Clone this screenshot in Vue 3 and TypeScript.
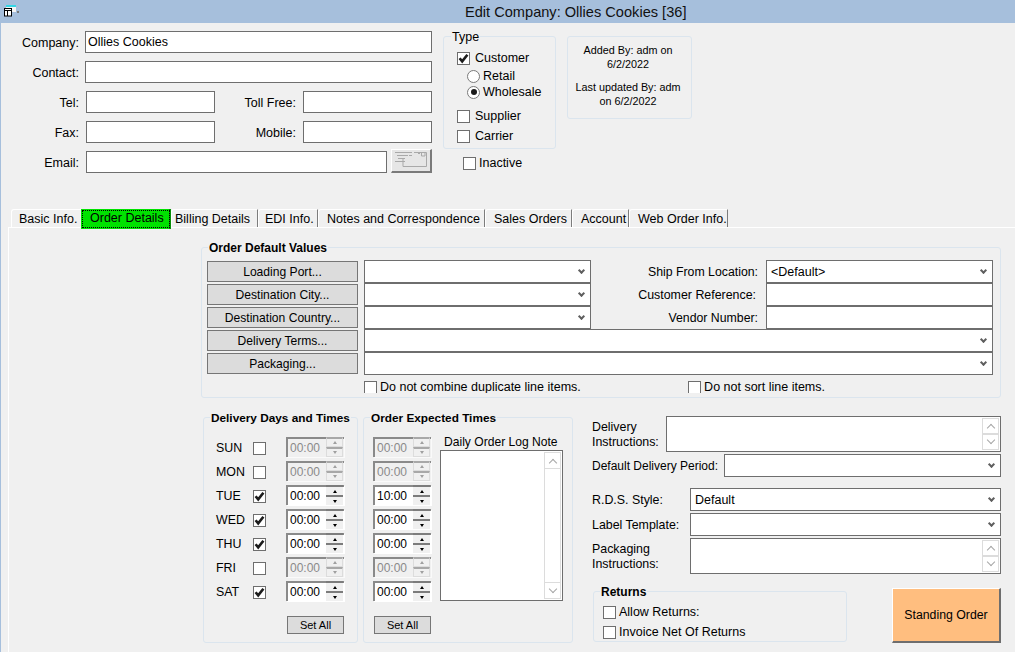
<script setup lang="ts">
type Day = { label: string; on: boolean; expected: string }
type Tab = { label: string; width: number; pad: number; active?: boolean }

const tabs: Tab[] = [
  { label: 'Basic Info.', width: 70, pad: 7 },
  { label: 'Order Details', width: 90, pad: 9 },
  { label: 'Billing Details', width: 87, pad: 3 },
  { label: 'EDI Info.', width: 60, pad: 6 },
  { label: 'Notes and Correspondence', width: 167, pad: 8 },
  { label: 'Sales Orders', width: 87, pad: 8 },
  { label: 'Account', width: 57, pad: 8 },
  { label: 'Web Order Info.', width: 99, pad: 8 },
]
tabs[1].active = true

const days: Day[] = [
  { label: 'SUN', on: false, expected: '00:00' },
  { label: 'MON', on: false, expected: '00:00' },
  { label: 'TUE', on: true, expected: '10:00' },
  { label: 'WED', on: true, expected: '00:00' },
  { label: 'THU', on: true, expected: '00:00' },
  { label: 'FRI', on: false, expected: '00:00' },
  { label: 'SAT', on: true, expected: '00:00' },
]
</script>

<template>
  <div class="window">
    <svg class="defs" width="0" height="0">
      <symbol id="tick" viewBox="0 0 13 13">
        <path d="M2.6 6.2 L5.2 9.4 L10.4 2.8" fill="none" stroke="#1c1c1c" stroke-width="2.6" />
      </symbol>
    </svg>

    <header class="titlebar">
      <svg class="app-icon" width="16" height="14" viewBox="0 0 16 14">
        <rect x="2" y="0" width="10" height="7" fill="#f4f4f4" />
        <rect x="2" y="0" width="10" height="2" fill="#35d6e6" />
        <rect x="13" y="6" width="2" height="2" fill="#777" />
        <rect x="0.5" y="3.5" width="7" height="7.5" fill="#fff" stroke="#000" />
        <path d="M1 5.5 H7 M3.5 6 V11" stroke="#000" />
      </svg>
      <span class="title">Edit Company: Ollies Cookies [36]</span>
    </header>

    <section class="head">
      <div class="contact">
        <label class="lbl">Company:</label>
        <div class="field wide">Ollies Cookies</div>
        <label class="lbl">Contact:</label>
        <div class="field wide"></div>
        <label class="lbl">Tel:</label>
        <div class="field"></div>
        <label class="lbl">Toll Free:</label>
        <div class="field"></div>
        <label class="lbl">Fax:</label>
        <div class="field"></div>
        <label class="lbl">Mobile:</label>
        <div class="field"></div>
        <label class="lbl">Email:</label>
        <div class="email-row">
          <div class="field grow"></div>
          <button class="mail-btn">
            <svg width="36" height="18" viewBox="0 0 36 18">
              <path
                d="M2 1.5 H19 M4 4.5 H15 M16 4.5 H19 M5 7.5 H12 M2 10.5 H12 M10 8 V15.5 H33.5 V1.5 H21 M25 2.5 H27 M28.5 1.5 H32 V5 H28.5 Z"
                fill="none"
                stroke="#a9a9a9"
              />
            </svg>
          </button>
        </div>
      </div>

      <div class="type-col">
        <fieldset class="group type">
          <legend>Type</legend>
          <div class="opt customer"><span class="box"><svg width="13" height="13"><use href="#tick" /></svg></span>Customer</div>
          <div class="opt radio"><span class="dot"></span>Retail</div>
          <div class="opt radio"><span class="dot on"></span>Wholesale</div>
          <div class="opt customer supplier"><span class="box"></span>Supplier</div>
          <div class="opt customer carrier"><span class="box"></span>Carrier</div>
        </fieldset>
        <div class="opt inactive"><span class="box"></span>Inactive</div>
      </div>

      <div class="audit">
        <p>Added By: adm on<br />6/2/2022</p>
        <p>Last updated By: adm<br />on 6/2/2022</p>
      </div>
    </section>

    <nav class="tabs">
      <div
        v-for="t in tabs"
        :key="t.label"
        class="tab"
        :class="{ active: t.active }"
        :style="{ width: t.width + 'px', paddingLeft: t.pad + 'px' }"
      >
        {{ t.label }}
      </div>
    </nav>

    <main class="panel">
      <fieldset class="group defaults">
        <legend class="bold">Order Default Values</legend>
        <div class="defaults-grid">
          <button class="lookup">Loading Port...</button>
          <div class="combo"></div>
          <label class="lbl-r">Ship From Location:</label>
          <div class="combo">&lt;Default&gt;</div>

          <button class="lookup">Destination City...</button>
          <div class="combo"></div>
          <label class="lbl-r shift">Customer Reference:</label>
          <div class="plain"></div>

          <button class="lookup">Destination Country...</button>
          <div class="combo"></div>
          <label class="lbl-r">Vendor Number:</label>
          <div class="plain"></div>

          <button class="lookup">Delivery Terms...</button>
          <div class="combo span3"></div>

          <button class="lookup">Packaging...</button>
          <div class="combo span3"></div>
        </div>
        <div class="clip-row">
          <div class="opt tight"><span class="box"></span>Do not combine duplicate line items.</div>
          <div class="opt tight second"><span class="box"></span>Do not sort line items.</div>
        </div>
      </fieldset>

      <div class="lower">
        <fieldset class="group days">
          <legend class="bold">Delivery Days and Times</legend>
          <div class="day-rows">
            <div v-for="d in days" :key="d.label" class="day-row">
              <span class="day-name">{{ d.label }}</span>
              <span class="box"><svg v-if="d.on" width="13" height="13"><use href="#tick" /></svg></span>
              <div class="spin" :class="{ off: !d.on }">
                <span class="spin-val">00:00</span>
                <span class="spin-btns"><i class="up"></i><i class="down"></i></span>
              </div>
            </div>
          </div>
          <button class="set-all days-set">Set All</button>
        </fieldset>

        <fieldset class="group expected">
          <legend class="bold">Order Expected Times</legend>
          <div class="expected-body">
            <div class="day-rows">
              <div v-for="d in days" :key="d.label" class="spin" :class="{ off: !d.on }">
                <span class="spin-val">{{ d.expected }}</span>
                <span class="spin-btns"><i class="up"></i><i class="down"></i></span>
              </div>
            </div>
            <div class="note">
              <div class="note-label">Daily Order Log Note</div>
              <div class="note-box">
                <div class="scroll tall">
                  <span class="sbtn"><b class="chev up"></b></span>
                  <span class="sbtn"><b class="chev"></b></span>
                </div>
              </div>
            </div>
          </div>
          <button class="set-all">Set All</button>
        </fieldset>

        <div class="extra">
          <div class="extra-row instr">
            <label class="two-line">Delivery<br />Instructions:</label>
            <div class="memo w-delivery">
              <div class="scroll">
                <span class="sbtn"><b class="chev up"></b></span>
                <span class="sbtn"><b class="chev"></b></span>
              </div>
            </div>
          </div>
          <div class="extra-row period">
            <label>Default Delivery Period:</label>
            <div class="combo w-period"></div>
          </div>
          <div class="extra-row rds">
            <label>R.D.S. Style:</label>
            <div class="combo w-style">Default</div>
          </div>
          <div class="extra-row tmpl">
            <label>Label Template:</label>
            <div class="combo w-style"></div>
          </div>
          <div class="extra-row instr pack">
            <label class="two-line">Packaging<br />Instructions:</label>
            <div class="memo w-style">
              <div class="scroll">
                <span class="sbtn"><b class="chev up"></b></span>
                <span class="sbtn"><b class="chev"></b></span>
              </div>
            </div>
          </div>
          <div class="returns-row">
            <fieldset class="group returns">
              <legend class="bold">Returns</legend>
              <div class="opt tight"><span class="box"></span>Allow Returns:</div>
              <div class="opt tight"><span class="box"></span>Invoice Net Of Returns</div>
            </fieldset>
            <button class="standing">Standing Order</button>
          </div>
        </div>
      </div>
    </main>
  </div>
</template>

<style>
html, body { margin: 0; background: #f0f0f0; }
</style>

<style scoped>
.window {
  width: 1015px;
  height: 652px;
  overflow: hidden;
  background: #f0f0f0;
  box-shadow: inset 1px 0 0 #a6bfdc;
  color: #000;
  font: 12.5px/14px "Liberation Sans", Arial, sans-serif;
}
.defs { position: absolute; }

.titlebar {
  height: 23px;
  background: #a6bfdc;
  display: flex;
  align-items: center;
}
.app-icon { margin: 0 0 0 4px; flex: none; }
.title { margin-left: 445px; font-size: 14.6px; color: #111; }

.head { height: 186px; display: flex; align-items: flex-start; }

.contact {
  margin-top: 8px;
  display: grid;
  grid-template-columns: 86px 129px 88px 129px;
  grid-auto-rows: 22px;
  row-gap: 8px;
  flex: none;
}
.lbl { text-align: right; padding-right: 7px; line-height: 24px; }
.field {
  box-sizing: border-box;
  background: #fff;
  border: 1px solid #6e6e6e;
  padding: 0 2px;
  line-height: 21px;
}
.wide { grid-column: span 3; margin-left: -1px; }
.email-row { grid-column: span 3; display: flex; gap: 4px; }
.grow { flex: 1; }
.mail-btn {
  box-sizing: border-box;
  width: 41px;
  height: 24px;
  margin-top: -2px;
  padding: 0;
  background: #e6e6e6;
  border: 1px solid #fff;
  border-right: 2px solid #7a7a7a;
  border-bottom: 2px solid #7a7a7a;
  display: flex;
  align-items: flex-start;
  justify-content: flex-start;
}
.mail-btn svg { margin: 1px 0 0 1px; }

.group {
  margin: 0;
  padding: 0;
  min-width: 0;
  box-sizing: border-box;
  border: 1px solid #dbe5ee;
  border-radius: 3px;
}
.group legend {
  padding: 2px 1px 0;
  margin-left: 7px;
  line-height: 12px;
  white-space: nowrap;
}
.group legend.bold { font-weight: bold; font-size: 12px; }
.defaults > legend.bold { margin-left: 1px; }
.days > legend.bold { margin-left: -6px; font-size: 11.8px; }
.expected > legend.bold { margin-left: -3px; font-size: 11.8px; }
.returns > legend.bold { margin-left: 6px; }

.type-col { margin: 6px 0 0 11px; width: 112px; flex: none; }
.type { height: 120px; width: 113px; padding-top: 7px; }

.opt { display: flex; align-items: center; height: 16px; white-space: nowrap; }
.box {
  box-sizing: border-box;
  width: 13px;
  height: 13px;
  flex: none;
  background: #fff;
  border: 1px solid #6e6e6e;
  display: block;
  position: relative;
}
.box svg { position: absolute; left: -1px; top: -1px; }
.customer { padding-left: 13px; }
.customer .box { margin-right: 5px; }
.radio { padding-left: 23px; }
.supplier { margin-top: 8px; }
.carrier { margin-top: 4px; }
.customer + .radio { margin-top: 2px; }
.dot {
  box-sizing: border-box;
  width: 13px;
  height: 13px;
  border: 1px solid #7a7a7a;
  border-radius: 50%;
  background: #fff;
  margin-right: 3px;
  display: flex;
  align-items: center;
  justify-content: center;
  flex: none;
}
.dot.on::after {
  content: "";
  width: 6px;
  height: 6px;
  border-radius: 50%;
  background: #1a1a1a;
}
.inactive { margin: 6px 0 0 20px; }
.inactive .box, .tight .box { margin-right: 3px; }

.audit {
  box-sizing: border-box;
  margin: 13px 0 0 12px;
  width: 125px;
  height: 83px;
  padding: 6px 3px 0 0;
  border: 1px solid #dbe5ee;
  border-radius: 3px;
  text-align: center;
  font-size: 10.8px;
}
.audit p { margin: 0 0 9px; }

.tabs {
  height: 18px;
  padding-left: 11px;
  display: flex;
  align-items: flex-start;
}
.tab {
  box-sizing: border-box;
  height: 18px;
  line-height: 19px;
  white-space: nowrap;
  border-top: 1px solid #fff;
  border-left: 1px solid #fff;
  border-right: 1px solid #7c7c7c;
  border-top-left-radius: 3px;
}
.tab:first-child { border-right: 0; }
.tab.active {
  position: relative;
  z-index: 1;
  height: 20px;
  line-height: 18px;
  background: #00e200;
  border: 0;
  border-right: 2px solid #0a8f0a;
  border-radius: 0;
  outline: 1px dotted #000;
  outline-offset: -2px;
}

.panel {
  margin-left: 8px;
  height: 425px;
  border-top: 1px solid #fff;
  border-left: 1px solid #fff;
  padding-top: 12px;
  box-sizing: border-box;
}

.defaults { margin-left: 192px; width: 800px; height: 158px; padding: 6px 0 0 5px; }
.defaults-grid {
  display: grid;
  grid-template-columns: 151px 233px 175px 227px;
  grid-auto-rows: 23px;
}
.lookup {
  box-sizing: border-box;
  width: 151px;
  height: 21px;
  margin-top: 1px;
  padding: 0;
  background: #dcdcdc;
  border: 1px solid #767676;
  font: 12.1px "Liberation Sans", Arial, sans-serif;
  color: #000;
}
.combo, .plain {
  box-sizing: border-box;
  height: 23px;
  position: relative;
  background: #fff;
  border: 1px solid #6e6e6e;
  padding-left: 4px;
  line-height: 22px;
}
.defaults-grid .combo, .defaults-grid .plain { margin-left: 6px; width: 227px; }
.defaults-grid .lbl-r + .combo, .defaults-grid .lbl-r + .plain { margin-left: 0; }
.defaults-grid .combo.span3 { width: 629px; grid-column: span 3; }
.combo::after {
  content: "";
  position: absolute;
  right: 6px;
  top: 7px;
  width: 3px;
  height: 3px;
  border-right: 2px solid #5f5f5f;
  border-bottom: 2px solid #5f5f5f;
  transform: rotate(45deg);
}
.lbl-r { text-align: right; padding-right: 8px; line-height: 24px; white-space: nowrap; font-size: 12.3px; }
.shift { padding-right: 10px; font-size: 12.4px; }
.clip-row { height: 12px; margin-top: 6px; overflow: hidden; display: flex; padding-left: 157px; }
.clip-row .opt { height: 13px; align-items: flex-start; line-height: 13px; }
.clip-row .second { margin-left: auto; margin-right: 175px; }

.lower { display: flex; align-items: flex-start; margin-left: 194px; margin-top: 12px; }
.days { width: 155px; height: 233px; padding: 13px 0 0 12px; }
.expected { width: 210px; height: 233px; margin-left: 5px; padding: 13px 0 0 9px; }
.day-rows { display: flex; flex-direction: column; gap: 4px; flex: none; }
.day-row { display: flex; align-items: center; height: 20px; }
.day-name { width: 37px; margin-top: 2px; font-size: 12.4px; }
.day-row .box { margin: 2px 20px 0 0; }

.spin {
  box-sizing: border-box;
  width: 58px;
  height: 20px;
  display: flex;
  background: #fff;
  border-top: 2px solid #8a8a8a;
  border-left: 2px solid #8a8a8a;
  box-shadow: 1px 1px 0 #fff;
  flex: none;
}
.spin-val { width: 38px; padding-left: 2px; font-size: 12px; line-height: 18px; box-sizing: border-box; }
.spin-btns { display: flex; flex-direction: column; width: 17px; margin-top: -2px; height: 20px; }
.spin-btns i {
  flex: 1;
  display: flex;
  align-items: center;
  justify-content: center;
  background: #f0f0f0;
  border-top: 2px solid #7c7c7c;
  box-sizing: border-box;
}
.spin-btns i::after {
  content: "";
  border-left: 2px solid transparent;
  border-right: 2px solid transparent;
}
.spin-btns .up::after { border-bottom: 3px solid #000; }
.spin-btns .down::after { border-top: 3px solid #000; }
.spin.off { background: #f0f0f0; color: #8a8a8a; box-shadow: 1px 1px 0 #fafafa; }
.spin.off .spin-btns i { border: 1px solid #dcdcdc; border-top: 2px solid #a8a8a8; }
.spin.off .up::after { border-bottom-color: #a0a0a0; }
.spin.off .down::after { border-top-color: #a0a0a0; }

.set-all {
  display: block;
  box-sizing: border-box;
  width: 57px;
  height: 18px;
  margin: 15px 0 0 1px;
  padding: 0;
  background: #dcdcdc;
  border: 1px solid #767676;
  font: 11px "Liberation Sans", Arial, sans-serif;
  color: #000;
}
.days-set { margin-left: 71px; }

.expected-body { display: flex; }
.note { margin-left: 9px; margin-top: -1px; }
.note-label { padding-left: 4px; line-height: 12px; margin-bottom: 2px; font-size: 12.1px; white-space: nowrap; }
.note-box {
  box-sizing: border-box;
  width: 123px;
  height: 151px;
  background: #fff;
  border: 1px solid #6e6e6e;
  position: relative;
}

.scroll {
  position: absolute;
  right: 1px;
  top: 1px;
  bottom: 1px;
  width: 17px;
  box-sizing: border-box;
  border: 1px solid #dcdcdc;
  display: flex;
  flex-direction: column;
  justify-content: space-between;
}
.sbtn {
  height: 16px;
  display: flex;
  align-items: center;
  justify-content: center;
  box-sizing: border-box;
  flex: none;
}
.sbtn:first-child { border-bottom: 1px solid #dcdcdc; }
.sbtn:last-child { border-top: 1px solid #dcdcdc; }
.chev {
  width: 6px;
  height: 6px;
  box-sizing: border-box;
  border-right: 1px solid #a6a6a6;
  border-bottom: 1px solid #a6a6a6;
  transform: translateY(-2px) rotate(45deg);
}
.chev.up { transform: translateY(2px) rotate(225deg); }

.extra { width: 409px; margin-left: 19px; margin-top: 6px; flex: none; }
.extra-row { display: flex; justify-content: space-between; align-items: center; }
.extra-row label { white-space: nowrap; font-size: 12.4px; }
.extra-row.period label { font-size: 12px; }
.two-line { line-height: 15px; margin-top: 2px; }
.instr { height: 36px; }
.period { margin-top: 2px; }
.rds { margin-top: 11px; }
.tmpl { margin-top: 2px; }
.pack { margin-top: 2px; }
.memo {
  box-sizing: border-box;
  height: 36px;
  position: relative;
  background: #fff;
  border: 1px solid #6e6e6e;
}
.w-delivery { width: 335px; }
.w-period { width: 277px; }
.w-style { width: 311px; }
.memo .scroll { border: 0; }
.memo .sbtn { height: 16px; border: 1px solid #dcdcdc; }
.returns-row { display: flex; align-items: flex-start; padding-left: 1px; margin-top: 10px; }
.returns { width: 254px; height: 58px; padding-top: 4px; }
.returns .opt { padding-left: 9px; height: 20px; }
.standing {
  box-sizing: border-box;
  width: 109px;
  height: 55px;
  margin: 4px 0 0 45px;
  padding: 0;
  background: #ffbe7f;
  border: 1px solid #fff;
  border-right: 2px solid #6e6e6e;
  border-bottom: 2px solid #6e6e6e;
  font: 12.3px "Liberation Sans", Arial, sans-serif;
  color: #000;
}
</style>
